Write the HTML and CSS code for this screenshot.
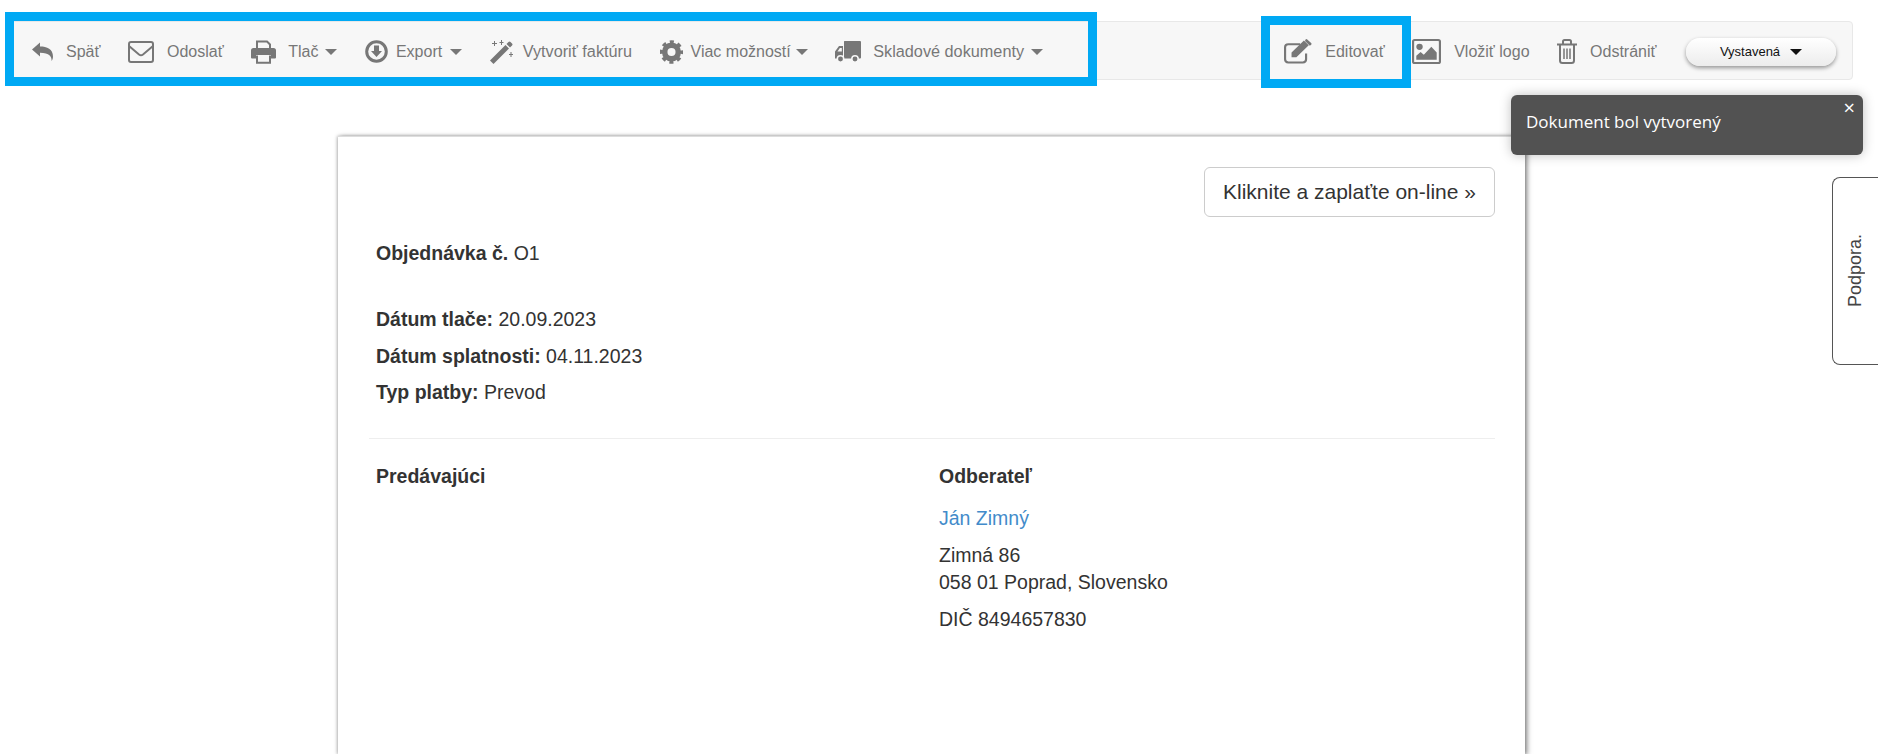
FILE: index.html
```html
<!DOCTYPE html>
<html lang="sk">
<head>
<meta charset="utf-8">
<title>Objednávka O1</title>
<link rel="stylesheet" href="styles.css">
</head>
<body>
<header class="toolbar">
  <nav class="group group-left">
    <a class="item">
      <svg class="icon" width="21" height="19" viewBox="0 0 21 19"><path d="M0 7.500 8 0.500V4.500C15 4.500 21 7 21 14.500 21 16.500 20.200 18 19.600 19 19.800 14.500 17.500 10.800 8 10.800V14.500Z"/></svg>
      <span>Späť</span>
    </a>
    <a class="item">
      <svg class="icon" width="26" height="22" viewBox="0 0 26 22"><rect class="line" x="1" y="1" width="24" height="20" rx="2"/><path class="line" d="M1 5 11 13.500Q13 15 15 13.500L25 5"/></svg>
      <span>Odoslať</span>
    </a>
    <a class="item item-print">
      <svg class="icon" width="25" height="24" viewBox="0 0 25 24"><path class="line" d="M6 10V1.500H16L19 4.500V10"/><path d="M2.500 8H22.500Q25 8 25 10.500V17.500Q25 18.500 24 18.500H20V15H5V18.500H1Q0 18.500 0 17.500V10.500Q0 8 2.500 8Z"/><path class="line" d="M6 15.500V22.800H19V15.500"/></svg>
      <span>Tlač</span><i class="caret caret-tlac"></i>
    </a>
    <a class="item tight">
      <svg class="icon" width="23" height="23" viewBox="0 0 23 23"><circle class="ring" cx="11.500" cy="11.500" r="9.800"/><path d="M9 5.500H14V11H17L11.500 17 6 11H9Z"/></svg>
      <span>Export</span><i class="caret caret-export"></i>
    </a>
    <a class="item mid">
      <svg class="icon" width="23" height="24" viewBox="0 0 23 24"><path d="M0 20.500 15.500 5 19 8.500 3.500 24Z"/><path d="M16.500 4 18.500 2Q19.500 1 20.500 2L22 3.500Q23 4.500 22 5.500L20 7.500Z"/><path d="M4 1V3H2V4H4V6H5V4H7V3H5V1ZM11 0V2H9.500V3H11V5H12V3H13.500V2H12V0ZM20.500 12V14H19V15H20.500V17H21.500V15H23V14H21.500V12Z"/></svg>
      <span>Vytvoriť faktúru</span>
    </a>
    <a class="item tight">
      <svg class="icon" width="23" height="24" viewBox="0 0 23 24"><circle class="ring-thick" cx="11.500" cy="12" r="6.800"/><circle class="teeth" cx="11.500" cy="12" r="10"/></svg>
      <span>Viac možností</span><i class="caret caret-near"></i>
    </a>
    <a class="item item-docs">
      <svg class="icon" width="26" height="22" viewBox="0 0 26 22"><path d="M9 0.500Q9 0 9.500 0H25Q26 0 26 1V16.500Q26 17.500 25 17.500H9ZM8 5V17.500H0V10.500L4 5Z"/><path class="cut" d="M6.800 7V10.500H2.400L4.900 7Z"/><circle class="wheel" cx="5.500" cy="18" r="3.200"/><circle class="wheel" cx="20" cy="18" r="3.200"/></svg>
      <span>Skladové dokumenty</span><i class="caret caret-docs"></i>
    </a>
  </nav>
  <nav class="group group-right">
    <a class="item">
      <svg class="icon" width="28" height="25" viewBox="0 0 26 24" preserveAspectRatio="none"><path class="line" d="M20.500 14V19.500Q20.500 22.500 17.500 22.500H4Q1 22.500 1 19.500V8Q1 5 4 5H15"/><path d="M7 13 18.500 1.500 23 6 11.500 17.500H7ZM20 0.500Q20.800-0.300 21.600 0.500L25.200 3.800Q26 4.600 25.200 5.400L24 6.500 19.500 2Z"/></svg>
      <span>Editovať</span>
    </a>
    <a class="item">
      <svg class="icon" width="29" height="25" viewBox="0 0 27 24" preserveAspectRatio="none"><rect class="line" x="1" y="1" width="25" height="22" rx="1.500"/><circle cx="7" cy="7.500" r="3"/><path d="M4 20V16L8 12.500 11 15 18 7.500 23 13V20Z"/></svg>
      <span>Vložiť logo</span>
    </a>
    <a class="item">
      <svg class="icon" width="20" height="25" viewBox="0 0 20 25"><path class="line" d="M3 6V21.500Q3 24 5.500 24H14.500Q17 24 17 21.500V6M0 5.500H20M6 5V2.500Q6 1 7.500 1H12.500Q14 1 14 2.500V5"/><path class="line thin" d="M7 9.500V20M10 9.500V20M13 9.500V20"/></svg>
      <span>Odstrániť</span>
    </a>
    <button class="status" type="button"><span>Vystavená</span><i class="caret caret-dark"></i></button>
  </nav>
</header>

<main class="sheet">
  <div class="pay-row"><a class="pay">Kliknite a zaplaťte on-line »</a></div>
  <p class="doc-title"><b>Objednávka č.</b> O1</p>
  <ul class="meta">
    <li><b>Dátum tlače:</b> 20.09.2023</li>
    <li><b>Dátum splatnosti:</b> 04.11.2023</li>
    <li><b>Typ platby:</b> Prevod</li>
  </ul>
  <hr class="rule">
  <div class="parties">
    <section class="party">
      <h2>Predávajúci</h2>
    </section>
    <section class="party">
      <h2>Odberateľ</h2>
      <p class="name"><a>Ján Zimný</a></p>
      <p class="address">Zimná 86<br>058 01 Poprad, Slovensko</p>
      <p class="tax">DIČ 8494657830</p>
    </section>
  </div>
</main>

<div class="mark mark-left"></div>
<div class="mark mark-edit"></div>

<aside class="toast">
  <span class="toast-close">×</span>
  Dokument bol vytvorený
</aside>

<a class="support"><span>Podpora.</span></a>
</body>
</html>
```

FILE: styles.css
```css
* { box-sizing: border-box; }

html, body {
  height: 754px;
  overflow: hidden;
}

body {
  margin: 0;
  background: #fff;
  color: #333;
  font-family: "Liberation Sans", Arial, sans-serif;
  position: relative;
}

.toolbar {
  display: flex;
  justify-content: space-between;
  align-items: center;
  height: 59px;
  margin: 21px 25px 0 8px;
  padding: 2px 16px 0 23px;
  background: #f7f7f7;
  border: 1px solid #e8e8e8;
  border-radius: 4px;
}

.group {
  display: flex;
  align-items: center;
  gap: 27.500px;
}

.item {
  display: flex;
  align-items: center;
  gap: 13px;
  color: #777;
  font-size: 16px;
  white-space: nowrap;
}

.group-left .item.mid,
.group-left .item:last-child { font-size: 16.250px; }

.item.tight { gap: 8px; }
.item.mid { gap: 10px; }
.item-print { gap: 12px; }
.item-docs { gap: 12px; }

.icon {
  display: block;
  flex: none;
  fill: #777;
}

.line {
  fill: none;
  stroke: #777;
  stroke-width: 2;
}

.thin { stroke-width: 1.500; }

.ring {
  fill: none;
  stroke: #777;
  stroke-width: 3;
}

.ring-thick {
  fill: none;
  stroke: #777;
  stroke-width: 5.500;
}

.teeth {
  fill: none;
  stroke: #777;
  stroke-width: 3.500;
  stroke-dasharray: 4 3.854;
  stroke-dashoffset: 2;
}

.cut { fill: #f7f7f7; }

.wheel {
  fill: #777;
  stroke: #f7f7f7;
  stroke-width: 1.500;
}

.caret {
  display: block;
  width: 0;
  height: 0;
  border-style: solid;
  border-width: 6.500px 6px 0;
  border-color: #777 transparent transparent;
}

.item .caret-tlac { margin-left: -5px; }
.item .caret-export { margin-left: 0; }
.item .caret-near { margin-left: -3px; }
.item .caret-docs { margin-left: -5px; }

.status {
  display: flex;
  align-items: center;
  justify-content: center;
  gap: 10px;
  width: 150px;
  height: 28px;
  margin-left: 2px;
  padding: 0;
  border: 0;
  border-radius: 14px;
  background: linear-gradient(#fff, #ececec);
  box-shadow: 0 2px 4px rgba(0, 0, 0, .4);
  color: #111;
  font-family: inherit;
  font-size: 13px;
}

.caret-dark {
  border-width: 6px 6px 0;
  border-top-color: #111;
}

.sheet {
  width: 1187px;
  height: 618px;
  margin: 56px 0 0 338px;
  padding: 30px 30px 0 31px;
  background: #fff;
  border-top: 1px solid #ddd;
  box-shadow: 2px 1px 5px rgba(0, 0, 0, .5), -1px 0 3px rgba(0, 0, 0, .2);
  font-size: 19.500px;
  line-height: 26.400px;
}

.pay-row {
  display: flex;
  justify-content: flex-end;
}

.pay {
  display: block;
  height: 50px;
  padding: 0 18px;
  border: 1px solid #ccc;
  border-radius: 6px;
  font-size: 21px;
  line-height: 48px;
}

.doc-title {
  margin: 23px 0 0;
  padding: 0 7px;
}

.meta {
  margin: 39.400px 0 0;
  padding: 0 7px;
  list-style: none;
}

.meta li + li { margin-top: 10.300px; }

.rule {
  height: 1px;
  margin: 32.200px 0 0;
  border: 0;
  background: #eee;
}

.parties {
  display: grid;
  grid-template-columns: 1fr 1fr;
}

.party {
  padding: 0 7px;
}

.party h2 {
  margin: 24px 0 0;
  font-size: inherit;
  line-height: inherit;
  font-weight: bold;
}

.name {
  margin: 15.600px 0 0;
  color: #428bca;
}

.address {
  margin: 10.600px 0 0;
  line-height: 27px;
}

.tax { margin: 9.800px 0 0; }

.mark {
  position: absolute;
  border: 9px solid #00a9f4;
}

.mark-left {
  left: 5px;
  top: 12px;
  width: 1092px;
  height: 74px;
}

.mark-edit {
  left: 1261px;
  top: 16px;
  width: 150px;
  height: 72px;
}

.toast {
  position: absolute;
  left: 1511px;
  top: 95px;
  width: 352px;
  height: 60px;
  padding: 14px 15px 0;
  border-radius: 6px;
  background: #525252;
  box-shadow: 0 0 12px rgba(0, 0, 0, .25);
  color: #fff;
  font-family: "Open Sans", sans-serif;
  font-size: 17px;
  line-height: 26px;
}

.toast-close {
  position: absolute;
  right: 8px;
  top: 0;
  font-size: 20px;
  line-height: 26px;
}

.support {
  position: absolute;
  left: 1832px;
  top: 177px;
  width: 46px;
  height: 188px;
  display: flex;
  align-items: center;
  padding-left: 12px;
  background: #fff;
  border: 1px solid #555;
  border-right: 0;
  border-radius: 8px 0 0 8px;
  color: #444;
  font-size: 18px;
}

.support span {
  writing-mode: vertical-rl;
  transform: rotate(180deg);
}
```
